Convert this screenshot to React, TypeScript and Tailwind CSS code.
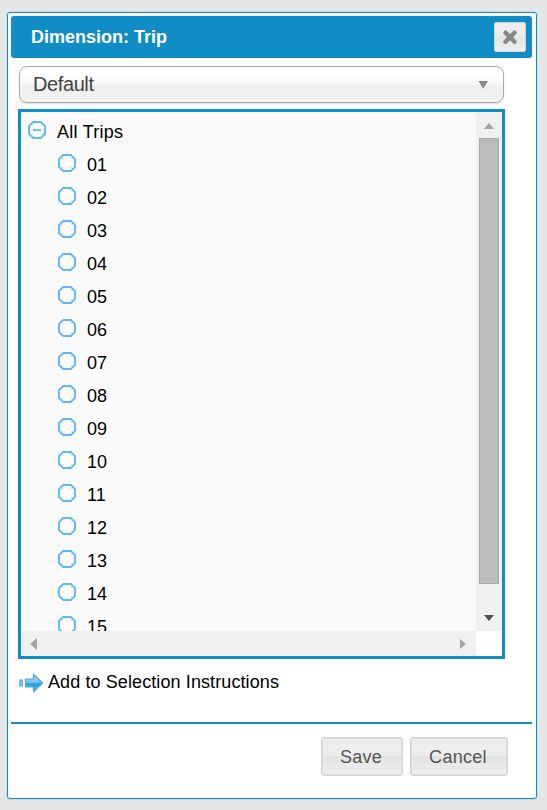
const trips = ['01', '02', '03', '04', '05', '06', '07', '08', '09', '10', '11', '12', '13', '14', '15'];

function NodeIcon({ open = false }: { open?: boolean }) {
  return (
    <svg width="18" height="18" viewBox="0 0 18 18" className="block shrink-0" fill="none">
      <path d="M5.2 1H12.8L17 5.2V12.8L12.8 17H5.2L1 12.8V5.2Z" fill="#fdfdfd" stroke="#62b6f8" strokeWidth="1.9" />
      <path d="M5 4L4 5M13 4L14 5M14 13L13 14M4 13L5 14" stroke="#b9dff9" strokeWidth="1" />
      {open && <path d="M5 9H13" stroke="#63b7f7" strokeWidth="1.8" />}
    </svg>
  );
}

function ArrowIcon() {
  return (
    <svg width="25" height="20" viewBox="0 0 25 20" className="mt-px block shrink-0">
      <defs>
        <linearGradient id="arrow" x1="0" y1="0" x2="0" y2="1">
          <stop offset="0" stopColor="#a9d8f6" />
          <stop offset="0.45" stopColor="#7cc3f0" />
          <stop offset="0.55" stopColor="#2f9fe4" />
          <stop offset="1" stopColor="#45bdf2" />
        </linearGradient>
      </defs>
      <path d="M0.8 7H3.4V13H0.8Z" fill="#8ccaf3" stroke="#5fa9dc" strokeWidth="1.2" />
      <path d="M6.5 6H14.5V1.2L23.6 10L14.5 18.8V14H6.5Z" fill="url(#arrow)" stroke="#5fa3d6" strokeWidth="1.2" strokeLinejoin="round" />
    </svg>
  );
}

function Button({ label, width }: { label: string; width: string }) {
  return (
    <button
      className={`${width} h-[39px] rounded-[3px] border border-[#d3d3d3] bg-[linear-gradient(#ededed_0%,#ededed_49%,#e3e3e3_50%,#efefef_100%)] pr-[2px] text-[18px] leading-[36px] tracking-[0.3px] text-[#555] shadow-[inset_0_0_0_1px_#dedede]`}
    >
      {label}
    </button>
  );
}

export default function App() {
  return (
    <div className="h-[810px] w-[547px] overflow-hidden bg-[#e6e6e6] pt-[12px] pl-[7px] font-['Liberation_Sans',Arial,sans-serif] text-black">
      <div className="h-[787px] w-[530px] rounded-[3px] border border-[#118dc6] bg-white pt-[3px] pl-[3px] shadow-[0_0_0_1px_#c5dce6]">
        <header className="flex h-[42px] w-[521px] items-center justify-between rounded-[3px] bg-[#118dc6] pr-[6px] pl-[20px]">
          <h1 className="text-[18px] leading-[21px] font-bold text-white">Dimension: Trip</h1>
          <button aria-label="Close" className="flex h-[30px] w-[32px] items-center justify-center rounded-[2px] border border-[#d3d3d3] bg-[linear-gradient(#ededed_49%,#e3e3e3_50%,#efefef)]">
            <svg width="14" height="14" viewBox="0 0 14 14" className="block">
              <path d="M2.5 2.7L11.5 11.7M11.5 2.7L2.5 11.7" stroke="#888" strokeWidth="4.4" strokeLinecap="round" />
            </svg>
          </button>
        </header>
        <div className="ml-[8px] mt-[8px] flex h-[37px] w-[485px] items-center justify-between rounded-[8px] border border-[#aaa] bg-[linear-gradient(#fff_20%,#f6f6f6_50%,#eee_52%,#f4f4f4_100%)] pr-[15px] pl-[13px] shadow-[0_1px_2px_#ddd]">
          <span className="mb-[2px] text-[20px] leading-[24px] tracking-[-0.4px] text-[#444]">Default</span>
          <svg width="10" height="9" className="block"><path d="M0.5 1H10L5.2 8.7Z" fill="#888" /></svg>
        </div>
        <div className="ml-[7px] mt-[6px] grid h-[550px] w-[487px] grid-cols-[455px_26px] grid-rows-[519px_25px] border-3 border-[#118dc6] bg-white">
          <div className="overflow-hidden bg-[#fafafa] pt-[3px]">
            <div className="flex h-[33px] items-start pt-[6px] pl-[7px]">
              <NodeIcon open />
              <span className="ml-[11px] text-[18px] leading-[22px] tracking-[0.25px]">All Trips</span>
            </div>
            {trips.map((trip) => (
              <div key={trip} className="flex h-[33px] items-start pt-[6px] pl-[37px]">
                <NodeIcon />
                <span className="ml-[11px] text-[18px] leading-[22px]">{trip}</span>
              </div>
            ))}
          </div>
          <div className="flex flex-col items-center bg-[#f0f0f0] pt-[11px]">
            <svg width="10" height="6" className="block shrink-0"><path d="M0 6L5 0L10 6Z" fill="#a3a3a3" /></svg>
            <div className="mt-[9px] h-[446px] w-[20px] border border-[#a8a8a8] bg-[#bcbcbc]" />
            <svg width="10" height="6" className="mt-[31px] block shrink-0"><path d="M0 0H10L5 6Z" fill="#505050" /></svg>
          </div>
          <div className="flex items-center justify-between bg-[#f0f0f0] pr-[10px] pl-[9px]">
            <svg width="7" height="12" className="block"><path d="M7 0V12L0 6Z" fill="#a3a3a3" /></svg>
            <svg width="6" height="10" className="block"><path d="M0 0V10L6 5Z" fill="#a3a3a3" /></svg>
          </div>
          <div className="bg-white" />
        </div>
        <div className="ml-[8px] mt-[13px] flex h-[22px] items-start">
          <ArrowIcon />
          <span className="ml-[4px] text-[18px] leading-[20px] tracking-[0.1px]">Add to Selection Instructions</span>
        </div>
        <footer className="mt-[28px] flex w-[521px] justify-end gap-[7px] border-t-2 border-t-[#118dc6] pt-[13px] pr-[24px]">
          <Button label="Save" width="w-[82px]" />
          <Button label="Cancel" width="w-[98px]" />
        </footer>
      </div>
    </div>
  );
}
